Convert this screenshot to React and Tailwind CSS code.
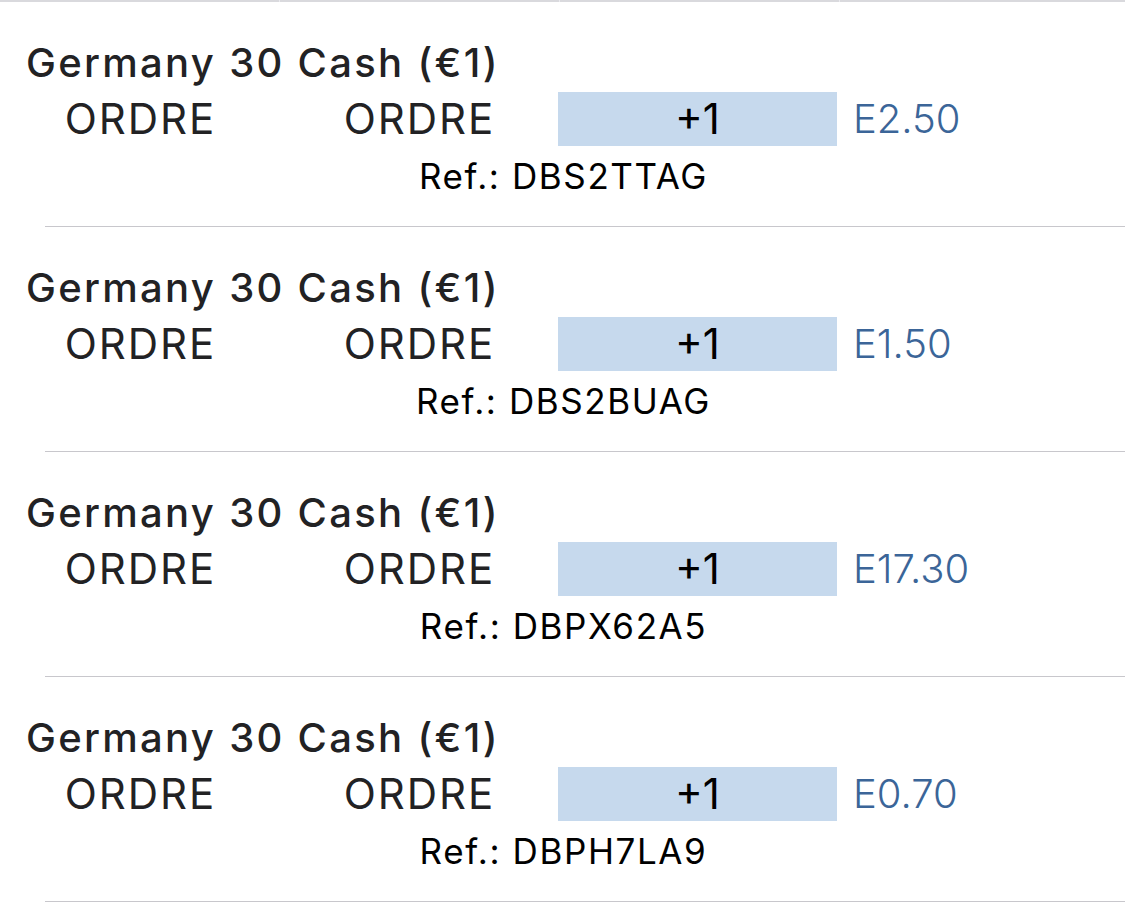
const orders = [
  { price: "E2.50", ref: "DBS2TTAG" },
  { price: "E1.50", ref: "DBS2BUAG" },
  { price: "E17.30", ref: "DBPX62A5" },
  { price: "E0.70", ref: "DBPH7LA9" },
];

const OrderRow = ({ price, reference }) => (
  <div className="flex flex-col">
    <div className="flex h-[224px] flex-col pt-[39px]">
      {/* instrument name */}
      <div className="h-[44px] pl-[26px] text-[40px] leading-[44px] font-medium tracking-[2.3px] text-[#222224]">
        Germany 30 Cash (€1)
      </div>
      {/* order columns */}
      <div className="mt-[7px] flex h-[54px] items-center">
        <div className="w-[279px] pl-[2px] text-center text-[42px] leading-[54px] tracking-[2px] text-[#222224]">ORDRE</div>
        <div className="w-[279px] pl-[2px] text-center text-[42px] leading-[54px] tracking-[2px] text-[#222224]">ORDRE</div>
        <div className="h-[54px] w-[279px] bg-[#c6d9ed] text-center text-[42px] leading-[54px] text-black">+1</div>
        <div className="pl-[16px] text-[40px] leading-[54px] font-light text-[#3b6598]">{price}</div>
      </div>
      {/* reference */}
      <div className="mt-[10px] h-[40px] pl-[2px] text-center text-[35px] leading-[40px] tracking-[1.6px] text-black">
        Ref.: {reference}
      </div>
    </div>
    <div className="ml-[45px] h-px bg-[#c8c7cc]" />
  </div>
);

export default function App() {
  return (
    <div className="h-[921px] w-[1125px] overflow-hidden bg-white font-['Inter',sans-serif]">
      <div className="flex h-[2px] bg-[#d9d9dd]">
        <div className="w-[280px] border-r border-[#ebebef]" />
        <div className="w-[280px] border-r border-[#ebebef]" />
        <div className="w-[280px] border-r border-[#ebebef]" />
        <div className="flex-1" />
      </div>
      {orders.map((o) => (
        <OrderRow key={o.ref} price={o.price} reference={o.ref} />
      ))}
    </div>
  );
}
